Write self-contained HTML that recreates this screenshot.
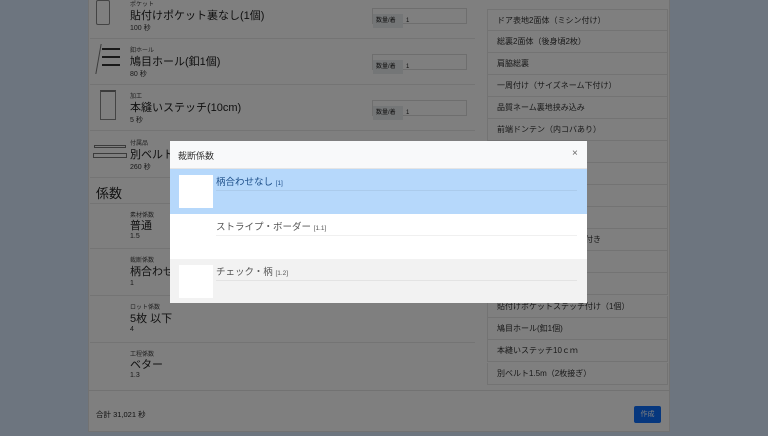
<!DOCTYPE html>
<html><head><meta charset="utf-8"><style>
*{margin:0;padding:0;box-sizing:border-box}
body{width:768px;height:436px;overflow:hidden;position:relative;background:#daebff;font-family:"Liberation Sans","Noto Sans CJK JP",sans-serif;color:#222}
.a{position:absolute;white-space:nowrap}
.card{position:absolute;left:88px;top:-5px;width:582px;height:437px;background:#fff;border:1px solid #e4e4e4}
.lbl{font-size:6px;color:#444}
.ttl{font-size:11px;color:#222}
.sec{font-size:7px;color:#333}
.inp{position:absolute;left:372px;width:95px;height:16px;border:1px solid #ddd;background:#fff}
.inp span{display:inline-block;width:30px;height:14px;background:#e9ecef;font-size:6px;line-height:14px;padding-left:3px}
.inp i{font-style:normal;font-size:6px;padding-left:3px}
.sep{position:absolute;left:90px;width:385px;height:1px;background:#e8e8e8}
.rl{position:absolute;left:487px;width:181px;height:22px;border:1px solid #e6e6e6;border-top:none;font-size:8px;line-height:21px;padding-left:9px;color:#333}
.ov{position:absolute;inset:0;background:rgba(0,0,0,.5)}
.m{position:absolute;left:170px;top:141px;width:417px;height:162px;background:#fff;overflow:hidden}
.row{position:absolute;left:0;width:417px;height:45px}
.th{position:absolute;left:9px;top:6px;width:34px;height:33px;background:#fff}
.rt{position:absolute;left:46px;top:5px;font-size:9.5px;color:#555}
.rt small{font-size:6.5px}
.rline{position:absolute;left:46px;right:10px;top:21px;height:1px;background:rgba(0,0,0,.06)}
</style></head><body>
<div class="card"></div>
<div class="a" style="left:96px;top:0;width:14px;height:25px;border:1px solid #888;border-radius:2px"></div>
<div class="a lbl" style="left:130px;top:-1px">ポケット</div>
<div class="a ttl" style="left:130px;top:7px">貼付けポケット裏なし(1個)</div>
<div class="a sec" style="left:130px;top:23px">100 秒</div>
<div class="inp" style="top:8px"><span>数量/着</span><i>1</i></div>
<div class="sep" style="top:38px"></div>
<div class="a" style="left:98px;top:44px;width:22px;height:30px;border-left:1px solid #777;transform:skewX(-10deg)"></div>
<div class="a" style="left:102px;top:48px;width:18px;height:2px;background:#333;box-shadow:0 8px #333,0 16px #333"></div>
<div class="a lbl" style="left:130px;top:45px">釦ホール</div>
<div class="a ttl" style="left:130px;top:53px">鳩目ホール(釦1個)</div>
<div class="a sec" style="left:130px;top:69px">80 秒</div>
<div class="inp" style="top:54px"><span>数量/着</span><i>1</i></div>
<div class="sep" style="top:84px"></div>
<div class="a" style="left:100px;top:90px;width:16px;height:30px;border:1px solid #888;border-top:2px solid #777"></div>
<div class="a lbl" style="left:130px;top:91px">加工</div>
<div class="a ttl" style="left:130px;top:99px">本縫いステッチ(10cm)</div>
<div class="a sec" style="left:130px;top:115px">5 秒</div>
<div class="inp" style="top:100px"><span>数量/着</span><i>1</i></div>
<div class="sep" style="top:130px"></div>
<div class="a" style="left:94px;top:145px;width:32px;height:3px;border:1px solid #777;box-shadow:0 9px 0 0 #fff,0 9px 0 1px #777"></div>
<div class="a lbl" style="left:130px;top:138px">付属品</div>
<div class="a ttl" style="left:130px;top:146px">別ベルト1.5m</div>
<div class="a sec" style="left:130px;top:162px">260 秒</div>
<div class="sep" style="top:177px"></div>
<div class="a" style="left:96px;top:183px;font-size:13px;color:#222">係数</div>
<div class="sep" style="top:203px"></div>
<div class="a lbl" style="left:130px;top:210px">素材係数</div>
<div class="a ttl" style="left:130px;top:217px">普通</div>
<div class="a sec" style="left:130px;top:233px">1.5</div>
<div class="sep" style="top:248px"></div>
<div class="a lbl" style="left:130px;top:255px">裁断係数</div>
<div class="a ttl" style="left:130px;top:263px">柄合わせなし</div>
<div class="a sec" style="left:130px;top:280px">1</div>
<div class="sep" style="top:295px"></div>
<div class="a lbl" style="left:130px;top:302px">ロット係数</div>
<div class="a ttl" style="left:130px;top:310px">5枚 以下</div>
<div class="a sec" style="left:130px;top:326px">4</div>
<div class="sep" style="top:342px"></div>
<div class="a lbl" style="left:130px;top:349px">工程係数</div>
<div class="a ttl" style="left:130px;top:356px">ベター</div>
<div class="a sec" style="left:130px;top:372px">1.3</div>
<div class="a" style="left:88px;top:390px;width:582px;height:1px;background:#e4e4e4"></div>
<div class="a" style="left:96px;top:409px;font-size:7.5px">合計 31,021 秒</div>
<div class="a" style="left:634px;top:406px;width:27px;height:17px;background:#0d6efd;border-radius:2px;color:#fff;font-size:7px;line-height:17px;text-align:center">作成</div>
<div class="rl" style="top:9px;border-top:1px solid #e6e6e6">ドア表地2面体（ミシン付け）</div>
<div class="rl" style="top:31px">総裏2面体（後身頃2枚）</div>
<div class="rl" style="top:53px">肩脇総裏</div>
<div class="rl" style="top:75px">一周付け（サイズネーム下付け）</div>
<div class="rl" style="top:97px">品質ネーム裏地挟み込み</div>
<div class="rl" style="top:119px">前端ドンテン（内コバあり）</div>
<div class="rl" style="top:141px"></div>
<div class="rl" style="top:163px"></div>
<div class="rl" style="top:185px">xxxxxxxxxxxxxxxxxxxx)</div>
<div class="rl" style="top:207px"></div>
<div class="rl" style="top:229px">xxxxxxxxxxxxxxxx釣月腰付き</div>
<div class="rl" style="top:251px"></div>
<div class="rl" style="top:273px">xxxxxxxxxxxxxxxxxx(1個)</div>
<div class="rl" style="top:296px">貼付けポケットステッチ付け（1個）</div>
<div class="rl" style="top:318px">鳩目ホール(釦1個)</div>
<div class="rl" style="top:340px">本縫いステッチ10ｃｍ</div>
<div class="rl" style="top:363px">別ベルト1.5m（2枚接ぎ）</div>
<div class="ov"></div>
<div class="m">
 <div class="row" style="top:0;height:28px;background:#f8f9fa;border-bottom:1px solid #e5e5e5">
  <div class="a" style="left:8px;top:8px;font-size:9px;color:#333">裁断係数</div>
  <div class="a" style="left:402px;top:7px;font-size:10px;color:#666">×</div>
 </div>
 <div class="row" style="top:28px;background:#b6d8fb"><div class="th"></div><div class="rt" style="color:#1d4f8a">柄合わせなし <small>[1]</small></div><div class="rline"></div></div>
 <div class="row" style="top:73px;background:#fff"><div class="rt">ストライプ・ボーダー <small>[1.1]</small></div><div class="rline"></div></div>
 <div class="row" style="top:118px;background:#f2f2f2;height:44px"><div class="th"></div><div class="rt">チェック・柄 <small>[1.2]</small></div><div class="rline"></div></div>
</div>
</body></html>
